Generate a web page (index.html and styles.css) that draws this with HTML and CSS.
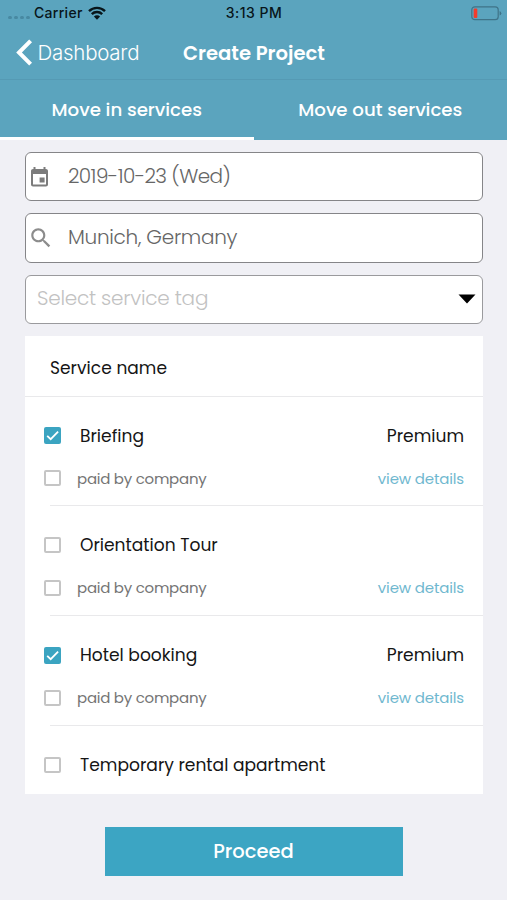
FILE: index.html
```html
<!DOCTYPE html>
<html lang="en">
<head>
<meta charset="utf-8">
<meta name="viewport" content="width=device-width, initial-scale=1">
<title>Create Project</title>
<link rel="stylesheet" href="styles.css">
</head>
<body>
<div class="screen">
  <header class="header">
    <div class="status">
      <div class="carrier">
        <span class="signal"><i></i><i></i><i></i><i></i></span>
        <span class="carrier-name">Carrier</span>
        <svg class="wifi" width="18" height="14" viewBox="0 0 18 14"><path d="M1 5.2a11.4 11.4 0 0 1 16 0M3.8 8.2a7.4 7.4 0 0 1 10.4 0" fill="none" stroke="#08151a" stroke-width="2.4"/><path d="M9 13.7 5.9 10.6a4.4 4.4 0 0 1 6.2 0z" fill="#08151a"/></svg>
      </div>
      <span class="time">3:13 PM</span>
      <svg class="battery" width="31" height="15" viewBox="0 0 31 15"><rect x=".8" y=".8" width="26.4" height="12.9" rx="3" fill="none" stroke="#3f7388" stroke-width="1.2"/><rect x="2.7" y="2.6" width="3.6" height="9.3" rx="1" fill="#f23b2c"/><path d="M28.6 5v4.6q1.7-.7 1.7-2.3T28.6 5z" fill="#3f7388"/></svg>
    </div>
    <nav class="navbar">
      <a class="back"><svg width="17" height="27" viewBox="0 0 17 27"><path d="M14.6 1.8 3 13.5l11.6 11.7" fill="none" stroke="#fff" stroke-width="4"/></svg><span class="back-label">Dashboard</span></a>
      <h1 class="title">Create Project</h1>
      <span></span>
    </nav>
    <div class="tabs">
      <a class="tab tab-active">Move in services</a>
      <a class="tab">Move out services</a>
    </div>
  </header>

  <main class="content">
    <div class="fields">
      <div class="field">
        <svg class="field-icon" width="26" height="26" viewBox="0 0 26 26"><path fill="#7c7c7c" d="M17.600 14h-5v5h5v-5zM16.500 3.500v2h-8v-2h-2v2H6c-1.100 0-2 .9-2 2V21c0 1.100.9 2 2 2h13c1.100 0 2-.9 2-2V7.500c0-1.100-.9-2-2-2h-.5v-2h-2zM19 21H6V10.500h13V21z" transform="translate(-1 -.5)"/></svg>
        <span class="value date">2019-10-23 (Wed)</span>
      </div>
      <div class="field">
        <svg class="field-icon" width="26" height="26" viewBox="0 0 24 24"><path fill="#8c8c8c" d="M15.5 14h-.79l-.28-.27C15.41 12.59 16 11.11 16 9.5 16 5.91 13.09 3 9.5 3S3 5.91 3 9.5 5.91 16 9.5 16c1.61 0 3.09-.59 4.23-1.57l.27.28v.79l5 4.99L20.49 19l-4.99-5zm-6 0C7.01 14 5 11.99 5 9.5S7.01 5 9.5 5 14 7.01 14 9.5 11.99 14 9.5 14z"/></svg>
        <span class="value">Munich, Germany</span>
      </div>
      <div class="field field-select">
        <span class="value">Select service tag</span>
        <svg width="18" height="10" viewBox="0 0 18 10"><path d="M.5.5h17L9 9.5z"/></svg>
      </div>
    </div>

    <section class="card">
      <h2 class="card-head">Service name</h2>
      <div class="service">
        <div class="line"><span class="check checked"><svg width="17" height="17" viewBox="0 0 17 17"><path d="m3.200 8.800 3.500 3.400 7.400-7.500" fill="none" stroke="#fff" stroke-width="1.8"/></svg></span><span class="name">Briefing</span><span class="level">Premium</span></div>
        <div class="line line-sub"><span class="check"></span><span class="paid">paid by company</span><a class="details">view details</a></div>
      </div>
      <div class="service">
        <div class="line"><span class="check"></span><span class="name">Orientation Tour</span></div>
        <div class="line line-sub"><span class="check"></span><span class="paid">paid by company</span><a class="details">view details</a></div>
      </div>
      <div class="service">
        <div class="line"><span class="check checked"><svg width="17" height="17" viewBox="0 0 17 17"><path d="m3.200 8.800 3.500 3.400 7.400-7.500" fill="none" stroke="#fff" stroke-width="1.8"/></svg></span><span class="name">Hotel booking</span><span class="level">Premium</span></div>
        <div class="line line-sub"><span class="check"></span><span class="paid">paid by company</span><a class="details">view details</a></div>
      </div>
      <div class="service">
        <div class="line"><span class="check"></span><span class="name">Temporary rental apartment</span></div>
      </div>
    </section>

    <button class="proceed">Proceed</button>
  </main>
</div>
</body>
</html>
```

FILE: styles.css
```css
* { box-sizing: border-box; }
body {
  margin: 0;
  background: #f0f0f5;
  font-family: Poppins, Inter, sans-serif;
  color: #151515;
}
span, a, h1, h2 { white-space: nowrap; }
.screen { width: 507px; height: 900px; overflow: hidden; }
.header { height: 140px; background: #5ba4be; color: #fff; }

.status {
  height: 26px;
  display: grid;
  grid-template-columns: 1fr auto 1fr;
  align-items: center;
  padding: 0 5px 0 8px;
  color: #08151a;
  font: 500 14px/26px Inter, sans-serif;
  letter-spacing: .3px;
}
.carrier { display: flex; align-items: center; }
.signal { display: flex; gap: 2px; width: 26px; padding-top: 8px; }
.signal i { width: 4px; height: 3px; border-radius: 2px; background: #4889a2; }
.carrier-name { width: 54px; }
.time { letter-spacing: .45px; margin-left: -2px; }
.battery { justify-self: end; }

.navbar {
  height: 54px;
  display: grid;
  grid-template-columns: 1fr auto 1fr;
  align-items: center;
  padding-left: 16px;
  border-bottom: 1px solid #559ab4;
}
.back { display: flex; align-items: center; gap: 4.5px; }
.back-label { font: 300 20.5px/30px Inter, sans-serif; letter-spacing: -.25px; }
.title { margin: 0 0 0 -15px; padding-top: 1px; font-size: 19.6px; font-weight: 600; line-height: 30px; }

.tabs { height: 60px; display: grid; grid-template-columns: 1fr 1fr; }
.tab {
  display: flex;
  align-items: center;
  justify-content: center;
  padding: 0 0 1px;
  font-size: 18.2px;
  font-weight: 500;
}
.tab-active { border-bottom: 3px solid #fff; padding: 2px 0 0; }

.content { padding: 12px 25px 0; display: flex; flex-direction: column; }
.fields { display: grid; gap: 12px; }
.field {
  height: 49.3px;
  display: flex;
  align-items: center;
  padding: 0 6px 0 2px;
  border: 1.5px solid #858588;
  border-radius: 6px;
  background: #fff;
  color: #666;
  font-size: 20px;
  font-weight: 300;
  letter-spacing: -.28px;
  width: 458px;
}
.field-icon { margin-right: 14px; }
.value { padding-bottom: 1px; }
.date { letter-spacing: -.57px; }
.field-select { padding-left: 11px; justify-content: space-between; color: #c2c2c2; border-color: #9a9a9d; }
.field-select .value { padding-bottom: 3px; letter-spacing: -.24px; }

.card { margin-top: 12px; width: 458px; height: 458px; background: #fff; overflow: hidden; }
.card-head {
  height: 61px;
  margin: 0;
  padding: 5px 25px 0;
  display: flex;
  align-items: center;
  border-bottom: 1px solid #e9e9eb;
  font-size: 17px;
  font-weight: 400;
  letter-spacing: .05px;
}
.service { height: 109.6px; padding: 24px 19px 0 18px; }
.service:not(:last-child) {
  background: linear-gradient(#e9e9eb, #e9e9eb) 25px 100% / 100% 1px no-repeat;
}
.line { height: 30px; display: flex; align-items: center; font-size: 17.1px; }
.line-sub { margin-top: 13px; height: 29px; font-size: 15px; letter-spacing: -.25px; color: #757575; }
.check { width: 17px; height: 16px; margin: 0 0 0 1px; flex: none; border: 2px solid #c5c5c5; border-radius: 2px; }
.checked { border: 0; background: #3ba4c1; height: 17px; }
.checked svg { display: block; }
.name { margin-left: 19px; }
.paid { margin-left: 16px; }
.level, .details { margin-left: auto; }
.details { color: #70b8cf; letter-spacing: -.15px; }

.proceed {
  align-self: center;
  width: 298px;
  height: 49px;
  margin-top: 33px;
  padding: 1px 0 0;
  border: 0;
  background: #3ca5c3;
  color: #fff;
  font: 500 19.5px/48px Poppins, Inter, sans-serif;
}
```
